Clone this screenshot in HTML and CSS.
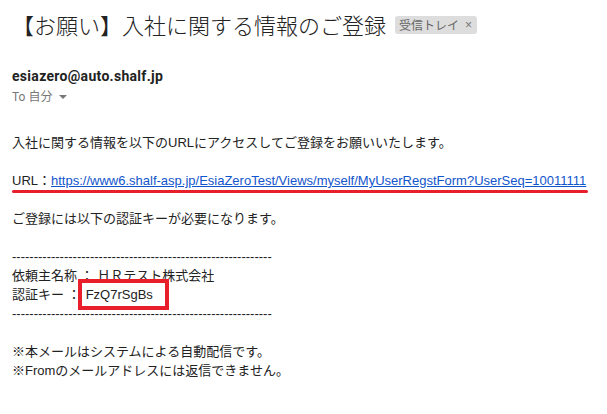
FILE: index.html
```html
<!DOCTYPE html>
<html lang="ja">
<head>
<meta charset="utf-8">
<link rel="stylesheet" href="styles.css">
</head>
<body>
<div class="mail">
  <div class="subject">
    <h1 class="title">【お願い】入社に関する情報のご登録</h1>
    <span class="label">受信トレイ<span class="x">×</span></span>
  </div>
  <div class="sender">esiazero@auto.shalf.jp</div>
  <div class="to">To 自分 <svg class="caret" width="8" height="4" viewBox="0 0 8 4"><path d="M0 0h8L4 4z" fill="#777"/></svg></div>
  <div class="body">
    <p class="line">入社に関する情報を以下のURLにアクセスしてご登録をお願いいたします。</p>
    <p class="line url-line">URL：<a class="link" href="#">https://www6.shalf-asp.jp/EsiaZeroTest/Views/myself/MyUserRegstForm?UserSeq=10011111</a></p>
    <p class="line">ご登録には以下の認証キーが必要になります。</p>
    <div class="block">
      <div class="line">------------------------------------------------------------</div>
      <div class="line">依頼主名称 ： ＨＲテスト株式会社</div>
      <div class="line">認証キー ：<span class="key">FzQ7rSgBs</span></div>
      <div class="line">------------------------------------------------------------</div>
    </div>
    <div class="notes">
      <div class="line">※本メールはシステムによる自動配信です。</div>
      <div class="line">※Fromのメールアドレスには返信できません。</div>
    </div>
  </div>
</div>
</body>
</html>
```
FILE: styles.css
```css
html, body { margin: 0; padding: 0; background: #fff; }
body { font-family: "Liberation Sans", "Noto Sans CJK JP", sans-serif; color: #222; }
.mail { padding: 0 12px; }
.subject { display: flex; align-items: center; gap: 9px; padding-top: 9px; height: 30px; }
.title { margin: 0; font-family: "Noto Sans CJK JP", sans-serif; font-weight: 300; font-size: 22px; line-height: 30px; color: #222; }
.label { background: #ddd; color: #666; border-radius: 3px; font-family: "Noto Sans CJK JP", sans-serif; font-size: 12px; line-height: 18px; padding: 0 5px 0 4px; display: flex; align-items: center; gap: 6px; margin-top: 2px; }
.label .x { font-family: "Liberation Sans", sans-serif; font-size: 12px; color: #777; }
.sender { font-family: Roboto, sans-serif; font-weight: 700; font-size: 14px; letter-spacing: 0.3px; margin-top: 28px; line-height: 18px; color: #222; }
.to { font-family: Roboto, "Noto Sans CJK JP", sans-serif; font-size: 12px; color: #777; margin-top: 4px; line-height: 16px; display: flex; align-items: center; gap: 3px; }
.caret { margin-left: 4px; }
.body { margin-top: 28px; font-size: 13px; }
.line { margin: 0; line-height: 19px; white-space: nowrap; }
p.line { margin-bottom: 19px; }
.url-line { position: relative; width: fit-content; }
.url-line::after { content: ""; position: absolute; left: 0; right: -2px; bottom: -3px; height: 3px; background: #e81e2a; border-radius: 2px; }
.link { color: #15c; }
.block { margin-top: 19px; }
.key { display: inline-block; border: 4px solid #e81e2a; padding: 2px 12px 2px 4px; margin: -6px 0 -6px -3px; line-height: 19px; }
.notes { margin-top: 19px; }
```
